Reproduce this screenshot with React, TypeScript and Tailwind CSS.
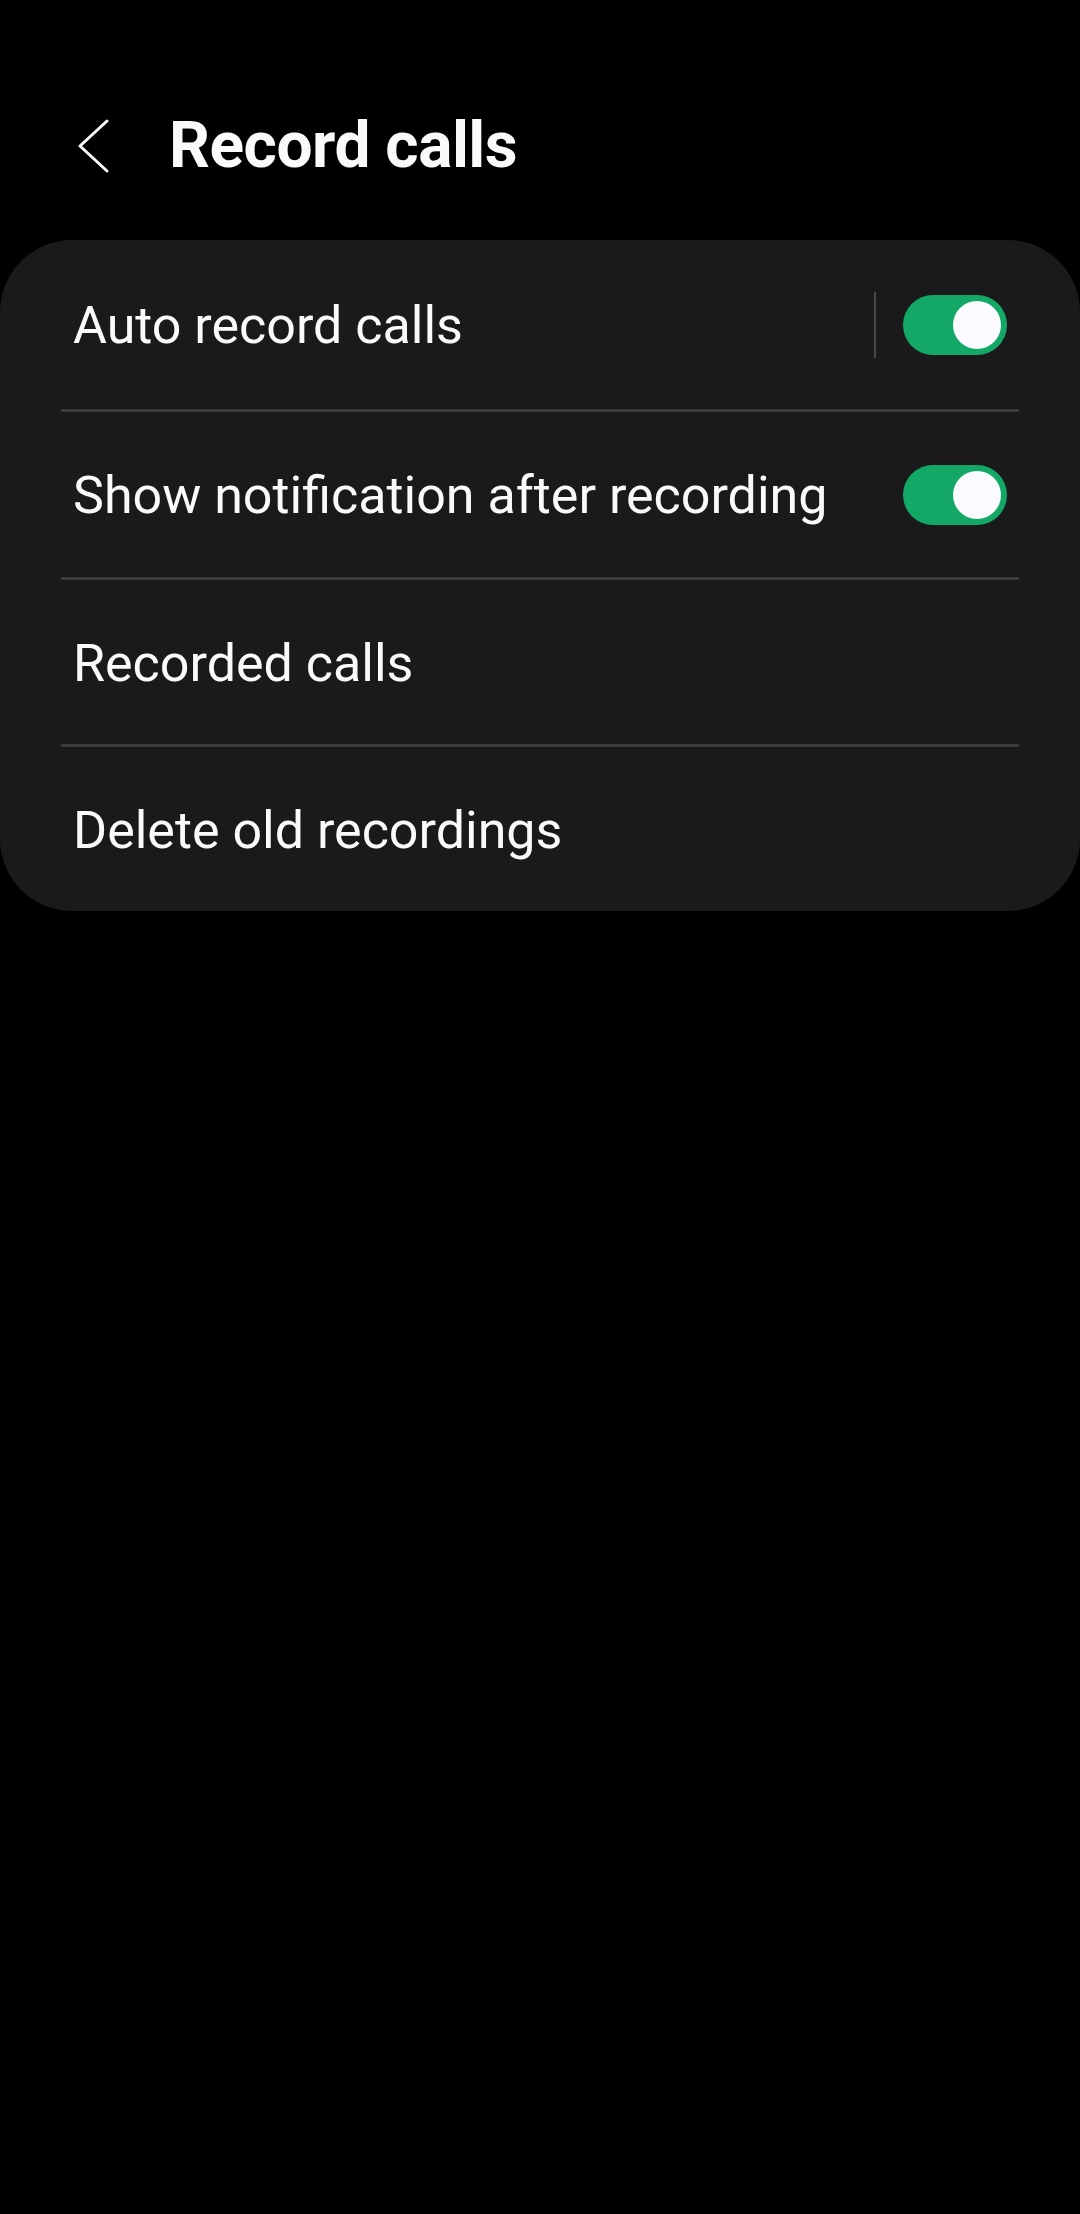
import React, { useState } from 'react';

const Toggle = ({ on, onChange }: { on: boolean; onChange: () => void }) => (
  <button
    onClick={onChange}
    className={`relative w-[104px] h-[60px] rounded-full shrink-0 ${on ? 'bg-[#14a866]' : 'bg-[#5a5a5e]'}`}
  >
    <span
      className={`absolute top-[6px] w-[48px] h-[48px] rounded-full bg-[#fbfbff] ${on ? 'left-[50px]' : 'left-[6px]'}`}
    />
  </button>
);

const Divider = () => <div className="mx-[61px] h-[3px] bg-[#3b3b3d]" />;

const App = () => {
  const [autoRecord, setAutoRecord] = useState(true);
  const [showNotif, setShowNotif] = useState(true);

  return (
    <div className="min-h-screen bg-black text-[#fafafa] font-['Roboto',sans-serif]">
      {/* Header */}
      <header className="h-[240px] pt-[52px] flex items-center">
        <button className="ml-[76px] w-[34px] h-[56px] flex items-center justify-center">
          <svg width="34" height="56" viewBox="0 0 34 56" fill="none">
            <path d="M31 3 L4 28 L31 53" stroke="#fafafa" strokeWidth="3" strokeLinecap="round" strokeLinejoin="round" />
          </svg>
        </button>
        <h1 className="ml-[59px] text-[64px] font-bold tracking-[-0.5px] leading-none">Record calls</h1>
      </header>

      {/* Settings card */}
      <div className="bg-[#1a1a1c] rounded-[72px]">
        <div className="h-[169px] flex items-center pl-[73px] pr-[73px]">
          <span className="flex-1 pt-[3px] text-[52px] leading-none">Auto record calls</span>
          <div className="w-[2px] h-[66px] bg-[#48484a] mr-[27px]" />
          <Toggle on={autoRecord} onChange={() => setAutoRecord(!autoRecord)} />
        </div>
        <Divider />
        <div className="h-[165px] flex items-center pl-[73px] pr-[73px]">
          <span className="flex-1 pt-[3px] text-[52px] leading-none">Show notification after recording</span>
          <Toggle on={showNotif} onChange={() => setShowNotif(!showNotif)} />
        </div>
        <Divider />
        <div className="h-[164px] flex items-center pl-[73px] pr-[73px]">
          <span className="flex-1 pt-[3px] text-[52px] leading-none">Recorded calls</span>
        </div>
        <Divider />
        <div className="h-[164px] flex items-center pl-[73px] pr-[73px]">
          <span className="flex-1 pt-[3px] text-[52px] leading-none">Delete old recordings</span>
        </div>
      </div>
    </div>
  );
};

export default App;
